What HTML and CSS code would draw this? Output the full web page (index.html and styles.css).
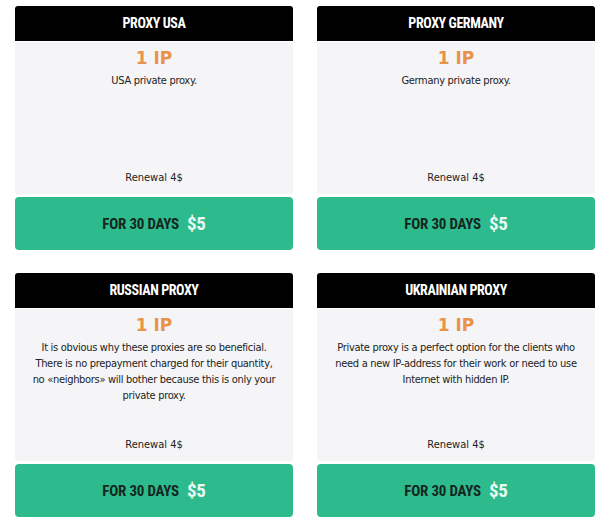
FILE: index.html
```html
<!DOCTYPE html>
<html lang="en">
<head>
    <meta charset="UTF-8">
    <meta name="viewport" content="width=device-width, initial-scale=1.0">
    <title>Private Proxy</title>
    <link rel="stylesheet" href="styles.css">
</head>
<body>

<div class="plans">
    <div class="plan">
        <div class="plan-title">PROXY USA</div>
        <div class="plan-body">
            <div class="plan-ip">1 IP</div>
            <p class="plan-desc">USA private proxy.</p>
            <div class="plan-renewal">Renewal 4$</div>
        </div>
        <a href="#" class="plan-buy">FOR 30 DAYS <span class="price">$5</span></a>
    </div>

    <div class="plan">
        <div class="plan-title">PROXY GERMANY</div>
        <div class="plan-body">
            <div class="plan-ip">1 IP</div>
            <p class="plan-desc">Germany private proxy.</p>
            <div class="plan-renewal">Renewal 4$</div>
        </div>
        <a href="#" class="plan-buy">FOR 30 DAYS <span class="price">$5</span></a>
    </div>

    <div class="plan">
        <div class="plan-title">RUSSIAN PROXY</div>
        <div class="plan-body">
            <div class="plan-ip">1 IP</div>
            <p class="plan-desc">It is obvious why these proxies are so beneficial. There is no prepayment charged for their quantity, no «neighbors» will bother because this is only your private proxy.</p>
            <div class="plan-renewal">Renewal 4$</div>
        </div>
        <a href="#" class="plan-buy">FOR 30 DAYS <span class="price">$5</span></a>
    </div>

    <div class="plan">
        <div class="plan-title">UKRAINIAN PROXY</div>
        <div class="plan-body">
            <div class="plan-ip">1 IP</div>
            <p class="plan-desc">Private proxy is a perfect option for the clients who need a new IP-address for their work or need to use Internet with hidden IP.</p>
            <div class="plan-renewal">Renewal 4$</div>
        </div>
        <a href="#" class="plan-buy">FOR 30 DAYS <span class="price">$5</span></a>
    </div>
</div>

</body>
</html>
```

FILE: styles.css
```css
body {
    font-family: "DejaVu Sans Condensed", "DejaVu Sans", sans-serif;
    font-stretch: condensed;
    margin: 0;
    padding: 6px 8px 0 15px;
    background-color: #fff;
    color: #222;
}

.plans {
    display: grid;
    grid-template-columns: 278px 278px;
    column-gap: 24px;
    row-gap: 23px;
}

.plan {
    display: flex;
    flex-direction: column;
}

.plan-title {
    background-color: #000;
    color: #fff;
    height: 35px;
    line-height: 35px;
    text-align: center;
    font-family: "Roboto Condensed", Roboto, sans-serif;
    font-stretch: condensed;
    font-weight: bold;
    font-size: 14px;
    letter-spacing: -0.4px;
    border-radius: 3px 3px 0 0;
}

.plan-body {
    background-color: #f5f5f7;
    margin-top: 1px;
    height: 152px;
    padding: 5px 14px 8px;
    box-sizing: border-box;
    display: flex;
    flex-direction: column;
    text-align: center;
    border-radius: 0 0 3px 3px;
}

.plan-ip {
    color: #e8924a;
    font-family: "DejaVu Sans", sans-serif;
    font-stretch: normal;
    font-weight: bold;
    font-size: 17px;
    line-height: 22px;
}

.plan-desc {
    margin: 4px 0 0;
    font-size: 11px;
    line-height: 16px;
    letter-spacing: -0.3px;
}

.plan-renewal {
    margin-top: auto;
    font-size: 11px;
    line-height: 16px;
}

.plan-buy {
    display: flex;
    align-items: center;
    justify-content: center;
    gap: 8px;
    margin-top: 3px;
    height: 53px;
    background-color: #2dbb8d;
    border-radius: 4px;
    color: #14271f;
    text-decoration: none;
    font-family: "Roboto Condensed", Roboto, sans-serif;
    font-stretch: condensed;
    font-weight: bold;
    font-size: 15px;
    letter-spacing: -0.2px;
}

.plan-buy .price {
    color: #eafaf4;
    font-size: 19px;
}
```
